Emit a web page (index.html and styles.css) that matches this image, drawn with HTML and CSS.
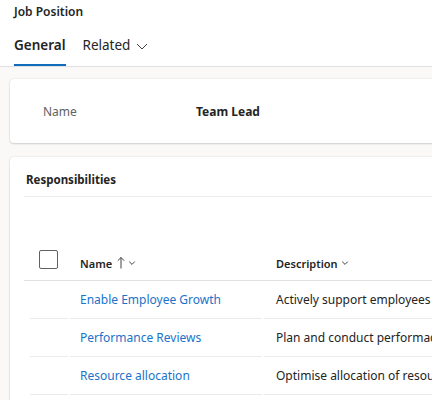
FILE: index.html
```html
<!DOCTYPE html>
<html>
<head>
<meta charset="utf-8">
<link rel="stylesheet" href="styles.css">
</head>
<body>
<div class="page">
  <header class="top">
    <div class="title">Job Position</div>
    <nav class="tabs">
      <div class="tab active">General</div>
      <div class="tab">Related
        <svg class="chev" width="12" height="12" viewBox="0 0 12 12"><path d="M1 4 L6 9 L11 4" fill="none" stroke="#424242" stroke-width="1"/></svg>
      </div>
    </nav>
  </header>
  <main class="content">
    <section class="card name-card">
      <div class="field-label">Name</div>
      <div class="field-value">Team Lead</div>
    </section>
    <section class="card resp-card">
      <div class="section-title">Responsibilities</div>
      <div class="divider"></div>
      <div class="spacer"></div>
      <div class="grid">
        <div class="row head">
          <div class="cell check"><span class="box"></span></div>
          <div class="cell hname">Name
            <svg class="up" width="8" height="13" viewBox="0 0 8 13"><path d="M4 12.5 V1.5 M0.8 4.7 L4 1.5 L7.2 4.7" fill="none" stroke="#424242" stroke-width="1"/></svg>
            <svg class="dn" width="8" height="8" viewBox="0 0 8 8"><path d="M1.2 2.6 L4 5.4 L6.8 2.6" fill="none" stroke="#424242" stroke-width="1"/></svg>
          </div>
          <div class="cell hdesc">Description
            <svg class="dn" width="8" height="8" viewBox="0 0 8 8"><path d="M1.2 2.6 L4 5.4 L6.8 2.6" fill="none" stroke="#424242" stroke-width="1"/></svg>
          </div>
        </div>
        <div class="row">
          <div class="cell check"></div>
          <div class="cell link">Enable Employee Growth</div>
          <div class="cell desc">Actively support employees in their growth</div>
        </div>
        <div class="row">
          <div class="cell check"></div>
          <div class="cell link">Performance Reviews</div>
          <div class="cell desc">Plan and conduct performace reviews</div>
        </div>
        <div class="row">
          <div class="cell check"></div>
          <div class="cell link">Resource allocation</div>
          <div class="cell desc">Optimise allocation of resources</div>
        </div>
      </div>
    </section>
  </main>
</div>
</body>
</html>
```

FILE: styles.css
```css
html, body {
  margin: 0;
  padding: 0;
  width: 432px;
  height: 400px;
  overflow: hidden;
  background: #faf9f8;
}
body {
  font-family: "Noto Sans", "Open Sans", sans-serif;
  color: #242424;
}
.page {
  width: 640px;
}
.top {
  background: #ffffff;
  border-bottom: 1px solid #e0e0e0;
  height: 67px;
  box-sizing: border-box;
  padding-left: 14px;
}
.title {
  font-size: 12px;
  font-weight: 600;
  line-height: 16px;
  padding-top: 4px;
}
.tabs {
  display: flex;
  gap: 17px;
  margin-top: 14px;
}
.tab {
  font-size: 13.5px;
  line-height: 20px;
  height: 32px;
  box-sizing: border-box;
  padding-top: 1px;
  display: flex;
  gap: 6px;
  align-items: flex-start;
}
.tab .chev {
  margin-top: 5px;
}
.tab.active {
  font-weight: 600;
  border-bottom: 2px solid #0f6cbd;
}
.content {
  padding: 12px 0 0 10px;
  display: flex;
  flex-direction: column;
  gap: 14px;
}
.card {
  background: #fff;
  border-radius: 4px;
  box-shadow: 0 0 2px rgba(0,0,0,0.12), 0 1px 2px rgba(0,0,0,0.14);
}
.name-card {
  height: 64px;
  display: flex;
  align-items: center;
  padding-left: 33px;
}
.field-label {
  width: 153px;
  font-size: 12px;
  color: #616161;
}
.field-value {
  font-size: 12px;
  font-weight: 700;
}
.resp-card {
  padding: 14px 0 0 14px;
  height: 300px;
}
.section-title {
  font-size: 11.5px;
  font-weight: 700;
  padding-left: 2px;
  line-height: 18px;
}
.divider {
  border-bottom: 1px solid #ebebeb;
  margin-top: 7px;
}
.spacer {
  height: 47px;
}
.row {
  display: grid;
  grid-template-columns: 44px 192px 300px;
  column-gap: 2px;
  height: 38px;
}
.row.head {
  height: 36px;
  border-bottom: 1px solid #e0e0e0;
}
.cell {
  display: flex;
  align-items: center;
  font-size: 12px;
  white-space: nowrap;
  overflow: hidden;
  border-bottom: 1px solid #ebebeb;
}
.row.head .cell {
  border-bottom: none;
  font-size: 11px;
  font-weight: 600;
  padding-top: 2px;
}
.cell.check {
  margin-left: 6px;
}
.row .cell:nth-child(2) {
  padding-left: 10px;
}
.row .cell:nth-child(3) {
  padding-left: 12px;
}
.box {
  width: 17px;
  height: 17px;
  border: 1px solid #616161;
  border-radius: 2px;
  margin-left: 9px;
  margin-top: -8px;
}
.up {
  margin-left: 5px;
  margin-top: -2px;
}
.dn {
  margin-left: 3px;
}
.link {
  color: #1a73c8;
}
.desc {
  color: #242424;
}
```
